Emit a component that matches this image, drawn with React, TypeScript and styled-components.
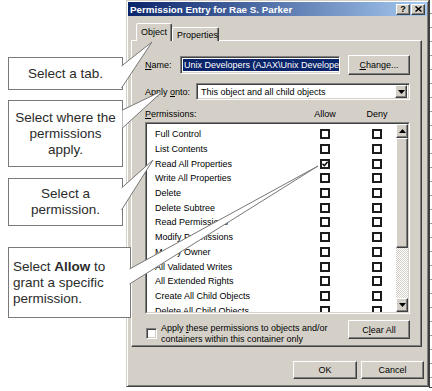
import React from "react";
import styled, { createGlobalStyle, css } from "styled-components";

const GlobalStyle = createGlobalStyle`
  html, body {
    margin: 0;
    padding: 0;
    background: #fff;
  }
  body {
    width: 432px;
    height: 391px;
    overflow: hidden;
    font-family: "Liberation Sans", Arial, sans-serif;
  }
`;

const raised = css`
  border: 1px solid;
  border-color: #fff #404040 #404040 #fff;
  box-shadow: inset -1px -1px 0 #808080;
`;

const sunken = css`
  border: 1px solid;
  border-color: #808080 #fff #fff #808080;
  box-shadow: inset 1px 1px 0 #404040, inset -1px -1px 0 #d4d0c8;
`;

const Page = styled.div`
  position: relative;
  width: 432px;
  height: 391px;
  box-sizing: border-box;
  padding-left: 8px;
  display: flex;
  align-items: flex-start;
  overflow: hidden;
`;

const Notes = styled.div`
  position: relative;
  z-index: 2;
  flex: none;
  width: 118px;
  display: flex;
  flex-direction: column;
  padding-top: 57px;
`;

const Callout = styled.div<{ $gap: number; $height: number; $width?: number; $left?: boolean }>`
  box-sizing: border-box;
  margin-top: ${(p) => p.$gap}px;
  width: ${(p) => p.$width ?? 115}px;
  height: ${(p) => p.$height}px;
  border: 1px solid #7a7a7a;
  background: #fff;
  display: flex;
  align-items: center;
  justify-content: ${(p) => (p.$left ? "flex-start" : "center")};
  text-align: ${(p) => (p.$left ? "left" : "center")};
  padding: 0 4px;
  font-size: 13.5px;
  line-height: 16px;
  color: #2b2b2b;
`;

const Pointers = styled.svg`
  position: absolute;
  left: 0;
  top: 0;
  z-index: 3;
  pointer-events: none;
`;

const Dialog = styled.div`
  flex: none;
  width: 303px;
  height: 387px;
  box-sizing: border-box;
  padding: 1px;
  background: #d4d0c8;
  border: 1px solid;
  border-color: #d4d0c8 #404040 #404040 #d4d0c8;
  box-shadow: inset 1px 1px 0 #fff, inset -1px -1px 0 #808080;
  display: flex;
  flex-direction: column;
  font-size: 9px;
  color: #000;
`;

const TitleBar = styled.div`
  height: 14px;
  display: flex;
  align-items: center;
  padding: 0 2px 0 2px;
  background: linear-gradient(to right, #0a246a, #a6caf0);
  color: #fff;
  font-weight: bold;
  font-size: 9.8px;
`;

const TitleText = styled.span`
  flex: 1;
  white-space: nowrap;
`;

const CaptionButton = styled.div`
  box-sizing: border-box;
  width: 14px;
  height: 11px;
  margin-left: 1px;
  background: #d4d0c8;
  ${raised};
  display: flex;
  align-items: center;
  justify-content: center;
  color: #000;
  font-size: 9px;
  font-weight: bold;
`;

const TabStrip = styled.div`
  position: relative;
  z-index: 1;
  height: 19px;
  margin: 6px 0 -1px;
  padding-left: 8px;
  display: flex;
  align-items: flex-end;
`;

const Tab = styled.div<{ $active?: boolean; $width: number }>`
  box-sizing: border-box;
  width: ${(p) => p.$width}px;
  height: ${(p) => (p.$active ? 18 : 14)}px;
  padding: ${(p) => (p.$active ? "3px 0 0 4px" : "2px 0 0 4px")};
  background: #d4d0c8;
  border: 1px solid;
  border-bottom: none;
  border-color: #fff #404040 transparent #fff;
  border-radius: 2px 2px 0 0;
  box-shadow: inset -1px 0 0 #808080;
  white-space: nowrap;
`;

const Panel = styled.div`
  box-sizing: border-box;
  width: 291px;
  height: 307px;
  margin-left: 3px;
  padding: 14px 11px 0 13px;
  ${raised};
  display: flex;
  flex-direction: column;
`;

const Row = styled.div<{ $gap?: number; $height: number }>`
  display: flex;
  align-items: center;
  margin-top: ${(p) => p.$gap ?? 0}px;
  height: ${(p) => p.$height}px;
  flex: none;
`;

const Label = styled.span<{ $width: number }>`
  width: ${(p) => p.$width}px;
  flex: none;
  white-space: nowrap;
`;

const TextField = styled.div`
  box-sizing: border-box;
  width: 160px;
  height: 18px;
  padding: 2px 1px 2px 2px;
  background: #fff;
  ${sunken};
  overflow: hidden;
  white-space: nowrap;
  display: flex;
  align-items: stretch;
`;

const Selected = styled.span`
  background: #0a246a;
  color: #fff;
  padding: 0 1px;
  line-height: 12px;
`;

const Button = styled.div<{ $width: number; $height: number }>`
  box-sizing: border-box;
  width: ${(p) => p.$width}px;
  height: ${(p) => p.$height}px;
  flex: none;
  background: #d4d0c8;
  ${raised};
  display: flex;
  align-items: center;
  justify-content: center;
  white-space: nowrap;
`;

const Combo = styled.div`
  box-sizing: border-box;
  flex: 1;
  height: 17px;
  padding: 2px 2px 2px 4px;
  background: #fff;
  ${sunken};
  display: flex;
  align-items: center;
  white-space: nowrap;
`;

const ComboText = styled.span`
  flex: 1;
`;

const ArrowButton = styled.div<{ $height: number }>`
  box-sizing: border-box;
  width: 12px;
  height: ${(p) => p.$height}px;
  flex: none;
  background: #d4d0c8;
  ${raised};
  display: flex;
  align-items: center;
  justify-content: center;
`;

const columns = css<{ $lead: number }>`
  display: grid;
  grid-template-columns: ${(p) => p.$lead}px 10px 42px 10px;
  align-items: center;
`;

const HeaderRow = styled.div<{ $lead: number }>`
  ${columns};
  height: 17px;
  margin-top: 5px;
  flex: none;
`;

const ColumnHead = styled.span`
  justify-self: center;
  white-space: nowrap;
`;

const ListBox = styled.div`
  box-sizing: border-box;
  height: 192px;
  flex: none;
  background: #fff;
  border: 2px solid;
  border-color: #808080 #fff #fff #808080;
  display: flex;
  position: relative;
  &::before {
    content: "";
    position: absolute;
    inset: 0;
    border: 1px solid;
    border-color: #404040 #d4d0c8 #d4d0c8 #404040;
    pointer-events: none;
    margin: -1px;
  }
`;

const Rows = styled.div`
  flex: 1;
  overflow: hidden;
  padding-top: 3px;
`;

const PermRow = styled.div<{ $lead: number }>`
  ${columns};
  height: 14.7px;
`;

const PermName = styled.span`
  padding-left: 8px;
  white-space: nowrap;
`;

const Box = styled.div`
  box-sizing: border-box;
  width: 10px;
  height: 10px;
  border: 2px solid #1c1c1c;
  background: #fff;
  display: flex;
  align-items: center;
  justify-content: center;
`;

const ScrollBar = styled.div`
  width: 12px;
  flex: none;
  display: flex;
  flex-direction: column;
  background: repeating-conic-gradient(#ffffff 0 25%, #d4d0c8 0 50%) 0 0 / 2px 2px;
`;

const Thumb = styled.div`
  box-sizing: border-box;
  height: 110px;
  background: #d4d0c8;
  ${raised};
`;

const Track = styled.div`
  flex: 1;
`;

const OptionRow = styled.div`
  display: flex;
  align-items: flex-start;
  margin-top: 6px;
`;

const SmallBox = styled.div`
  box-sizing: border-box;
  width: 11px;
  height: 11px;
  margin: 8px 0 0 1px;
  flex: none;
  background: #fff;
  ${sunken};
`;

const OptionText = styled.div`
  flex: 1;
  margin: 3px 0 0 4px;
  line-height: 11px;
`;

const Footer = styled.div`
  display: flex;
  justify-content: flex-end;
  gap: 4px;
  margin-top: 14px;
  padding-right: 3px;
`;

const BackWindow = styled.div`
  flex: none;
  width: 3px;
  height: 388px;
  box-sizing: border-box;
  border-left: 1px solid #404040;
  border-bottom: 1px solid #404040;
  background: repeating-linear-gradient(to bottom, #fff 0 13px, #9a9a9a 13px 14px);
`;

const permissions = [
  "Full Control",
  "List Contents",
  "Read All Properties",
  "Write All Properties",
  "Delete",
  "Delete Subtree",
  "Read Permissions",
  "Modify Permissions",
  "Modify Owner",
  "All Validated Writes",
  "All Extended Rights",
  "Create All Child Objects",
  "Delete All Child Objects",
];

const Triangle = ({ up }: { up?: boolean }) => (
  <svg width="7" height="4" viewBox="0 0 7 4">
    <path d={up ? "M3.5 0 L7 4 L0 4 Z" : "M0 0 L7 0 L3.5 4 Z"} fill="#000" />
  </svg>
);

const Check = () => (
  <svg width="6" height="6" viewBox="0 0 6 6">
    <path d="M0.5 2.8 L2.3 4.6 L5.6 0.8" stroke="#000" strokeWidth="1.4" fill="none" />
  </svg>
);

export default function App() {
  return (
    <Page>
      <GlobalStyle />
      <Notes>
        <Callout $gap={0} $height={33}>
          Select a tab.
        </Callout>
        <Callout $gap={10} $height={67}>
          Select where the permissions apply.
        </Callout>
        <Callout $gap={11} $height={48}>
          Select a permission.
        </Callout>
        <Callout $gap={21} $height={71} $width={123} $left>
          <span>
            Select <b>Allow</b> to grant a specific permission.
          </span>
        </Callout>
      </Notes>

      <Dialog>
        <TitleBar>
          <TitleText>Permission Entry for Rae S. Parker</TitleText>
          <CaptionButton>?</CaptionButton>
          <CaptionButton>
            <svg width="7" height="6" viewBox="0 0 7 6">
              <path d="M0.5 0.5 L6.5 5.5 M6.5 0.5 L0.5 5.5" stroke="#000" strokeWidth="1.5" />
            </svg>
          </CaptionButton>
        </TitleBar>

        <TabStrip>
          <Tab $active $width={36}>
            Object
          </Tab>
          <Tab $width={47}>Properties</Tab>
        </TabStrip>

        <Panel>
          <Row $height={20}>
            <Label $width={35}>
              <u>N</u>ame:
            </Label>
            <TextField>
              <Selected>Unix Developers (AJAX\Unix Developers)</Selected>
            </TextField>
            <Button $width={62} $height={20} style={{ marginLeft: "auto" }}>
              <span>
                <u>C</u>hange...
              </span>
            </Button>
          </Row>

          <Row $gap={8} $height={17}>
            <Label $width={51}>
              Apply <u>o</u>nto:
            </Label>
            <Combo>
              <ComboText>This object and all child objects</ComboText>
              <ArrowButton $height={13}>
                <Triangle />
              </ArrowButton>
            </Combo>
          </Row>

          <HeaderRow $lead={175}>
            <span>
              <u>P</u>ermissions:
            </span>
            <ColumnHead>Allow</ColumnHead>
            <span />
            <ColumnHead>Deny</ColumnHead>
          </HeaderRow>

          <ListBox>
            <Rows>
              {permissions.map((name) => (
                <PermRow key={name} $lead={173}>
                  <PermName>{name}</PermName>
                  <Box>{name === "Read All Properties" && <Check />}</Box>
                  <span />
                  <Box />
                </PermRow>
              ))}
            </Rows>
            <ScrollBar>
              <ArrowButton $height={14}>
                <Triangle up />
              </ArrowButton>
              <Thumb />
              <Track />
              <ArrowButton $height={14}>
                <Triangle />
              </ArrowButton>
            </ScrollBar>
          </ListBox>

          <OptionRow>
            <SmallBox />
            <OptionText>
              Apply <u>t</u>hese permissions to objects and/or
              <br />
              containers within this container only
            </OptionText>
            <Button $width={62} $height={19}>
              <span>
                C<u>l</u>ear All
              </span>
            </Button>
          </OptionRow>
        </Panel>

        <Footer>
          <Button $width={64} $height={18}>
            OK
          </Button>
          <Button $width={63} $height={18}>
            Cancel
          </Button>
        </Footer>
      </Dialog>

      <BackWindow />

      <Pointers width="432" height="391" viewBox="0 0 432 391">
        <g fill="#fff" stroke="#777" strokeWidth="1">
          <path d="M121.5 66 L152 42 L121.5 88" />
          <path d="M122.5 110 L164 90 L122.5 128" />
          <path d="M121.5 188 L153 160 L121.5 210" />
          <path d="M129.5 269 L318 166 L129.5 284" />
        </g>
      </Pointers>
    </Page>
  );
}
